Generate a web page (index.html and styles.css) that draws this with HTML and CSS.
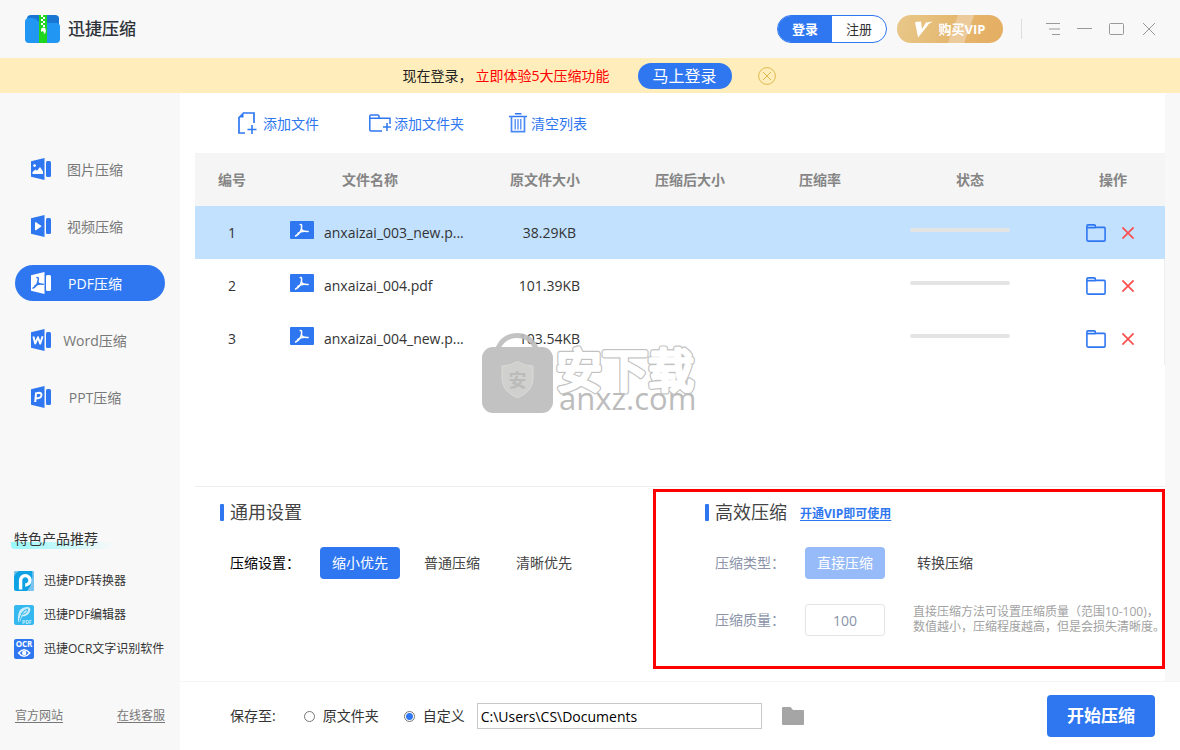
FILE: index.html
```html
<!DOCTYPE html>
<html lang="zh-CN">
<head>
<meta charset="utf-8">
<title>迅捷压缩</title>
<link rel="stylesheet" href="styles.css">
</head>
<body>
<svg class="symbols" aria-hidden="true">
  <symbol id="book" viewBox="0 0 20 22">
    <path d="M0 3.2 13.5 0V22L0 18.8Z"/>
    <rect x="15" y="3" width="5" height="16" rx="1.5"/>
  </symbol>
  <symbol id="pdf-file" viewBox="0 0 24 18">
    <rect width="24" height="18" rx="1" fill="#2f77f1"/>
    <path d="M10.2 3.6C12.2 3 11.6 6 11.4 7.6 11.9 9.6 13.8 10.6 18.2 10.4M11.4 7.6C11.2 10 9 13 5.6 15M7.8 12.4C9.8 11 12 10.3 14.6 10.2" fill="none" stroke="#fff" stroke-width="1.5" stroke-linecap="round"/>
  </symbol>
  <symbol id="folder" viewBox="0 0 20 18">
    <path d="M.9 15.8V2Q.9.9 2 .9H8.3Q9.2.9 9.2 1.8L9.6 3.4H18.2Q19.1 3.4 19.1 4.3V16Q19.1 17.1 18 17.1H2Q.9 17.1.9 15.8ZM1.5 3.6H9.6" fill="none" stroke="#2f77f1" stroke-width="1.6"/>
  </symbol>
  <symbol id="cross" viewBox="0 0 12 12">
    <path d="M.4.4 11.6 11.6M11.6.4.4 11.6" fill="none" stroke="#fa5252" stroke-width="1.8"/>
  </symbol>
</svg>

<header class="titlebar">
  <svg class="logo" viewBox="0 0 35 28" aria-hidden="true">
    <path d="M2 3.5Q2 0 6 0H30Q34 0 34 3.5V12H2Z" fill="#1976d2"/>
    <path d="M0 7Q0 3 4 3H8Q11 3 12.5 5.5T17 8H31Q35 8 35 11.5V24Q35 28 31 28H4Q0 28 0 24Z" fill="#2196f3"/>
    <rect x="14" width="8" height="28" fill="#1fd51f"/>
    <path d="M16 0h2v2h-2zM18 2h2v2h-2zM16 4h2v2h-2zM18 6h2v2h-2zM16 8h2v2h-2zM18 10h2v2h-2z" fill="#fff"/>
    <path d="M16 17V15A2.3 2.3 0 0 1 20.8 15V16.5Q20.5 19 18.7 18.7 19.5 16.8 18 16.2 16.6 16 16 17Z" fill="#fff"/>
  </svg>
  <h1 class="app-name">迅捷压缩</h1>
  <div class="account">
    <button class="account-btn account-login">登录</button>
    <button class="account-btn">注册</button>
  </div>
  <button class="vip">
    <svg class="vip-mark" viewBox="0 0 18 17" aria-hidden="true"><path d="M0 1 6 .5 7 8 11 1.5 18 .5Q14 2 12 5.5L3 16.5Z" fill="#fff"/></svg>
    购买VIP
  </button>
  <div class="window-tools">
    <button class="tool" aria-label="菜单"><svg viewBox="0 0 14 12"><path d="M0 .5H14M3 6H14M6 11.5H14"/></svg></button>
    <button class="tool" aria-label="最小化"><svg viewBox="0 0 14 12"><path d="M-1 5.5H14"/></svg></button>
    <button class="tool" aria-label="最大化"><svg viewBox="0 0 14 12"><rect x="-.5" y=".5" width="14" height="11" rx="1"/></svg></button>
    <button class="tool" aria-label="关闭"><svg viewBox="0 0 14 12"><path d="M1 0 13 12M13 0 1 12"/></svg></button>
  </div>
</header>

<div class="banner">
  <p class="banner-text">现在登录，<span class="banner-hot">立即体验5大压缩功能</span></p>
  <button class="banner-login">马上登录</button>
  <button class="banner-close" aria-label="关闭提示">
    <svg viewBox="0 0 18 18"><circle cx="9" cy="9" r="8.4"/><path d="M5 5 13 13M13 5 5 13"/></svg>
  </button>
</div>

<div class="workspace">
  <aside class="sidebar">
    <nav class="modes">
      <button class="mode">
        <svg class="mode-icon" viewBox="0 0 20 22"><use href="#book"/><circle cx="3.6" cy="7.6" r="1.4" fill="#fff"/><path d="M1.5 16V14L4.5 11.5 6 12.8 9 9 12 13.5V16Z" fill="#fff"/></svg>
        <span class="mode-label">图片压缩</span>
      </button>
      <button class="mode">
        <svg class="mode-icon" viewBox="0 0 20 22"><use href="#book"/><path d="M4 7.5V15Q4.2 15.6 5 15.2L10.2 11.6Q10.6 11.2 10.2 10.8L5 7.2Q4.2 6.8 4 7.5Z" fill="#fff"/></svg>
        <span class="mode-label">视频压缩</span>
      </button>
      <button class="mode mode-active" aria-current="page">
        <svg class="mode-icon" viewBox="0 0 20 22"><use href="#book"/><path d="M6 5.5C8 5 7.2 8 6.8 9.6 7.4 11.6 9 12.4 12.2 12.3M6.8 9.6C6.4 12 4.6 14.6 2 16.2M4 13.7C5.8 12.6 8 12 10 12.1" fill="none" stroke="#2f77f1" stroke-width="1.5" stroke-linecap="round"/></svg>
        <span class="mode-label">PDF压缩</span>
      </button>
      <button class="mode">
        <svg class="mode-icon" viewBox="0 0 20 22"><use href="#book"/><path d="M2.4 7.5 4.2 14.6 7 8.2 9.2 14.6 11.6 7.2" fill="none" stroke="#fff" stroke-width="1.9" stroke-linejoin="round"/></svg>
        <span class="mode-label">Word压缩</span>
      </button>
      <button class="mode">
        <svg class="mode-icon" viewBox="0 0 20 22"><use href="#book"/><path d="M4.2 16 5 7.3 8 6.8Q10.8 6.8 10.4 9.4 9.8 12.2 7 12.2L4.7 12.3" fill="none" stroke="#fff" stroke-width="2"/></svg>
        <span class="mode-label">PPT压缩</span>
      </button>
    </nav>

    <section class="products">
      <h2 class="products-title">特色产品推荐</h2>
      <a class="product" href="#">
        <svg class="product-icon" viewBox="0 0 20 20"><rect width="20" height="20" rx="2" fill="#0ea2e4"/><path d="M18 0Q20 0 20 2V18Q20 20 18 20H13Q20 12 18 0ZM0 6Q1 2 5 0H2Q0 0 0 2Z" fill="#7cc4ef"/><path d="M6.6 18.6V9.5A4.7 4.7 0 1 1 11.2 14" fill="none" stroke="#fff" stroke-width="3.4"/></svg>
        迅捷PDF转换器
      </a>
      <a class="product" href="#">
        <svg class="product-icon" viewBox="0 0 20 20"><rect width="20" height="20" rx="2" fill="#35b8f0"/><path d="M4 17Q3.4 9 6 5 9 1.8 14 2 17.4 2.6 16 6.4 13.6 11.5 8 11.6L6 17Z" fill="#c9edfc"/><path d="M5 17Q6 9 11 5M7 9Q10 4.5 13.5 4.2 14 8 8.5 9.4" fill="none" stroke="#35b8f0" stroke-width="1"/><text x="8" y="18.5" class="tiny-pdf">PDF</text></svg>
        迅捷PDF编辑器
      </a>
      <a class="product" href="#">
        <svg class="product-icon" viewBox="0 0 20 20"><rect width="20" height="20" rx="2" fill="#2f77f1"/><text x="10" y="8.3" class="tiny-ocr">OCR</text><path d="M4.6 14Q10 7.4 15.8 14 10 20.6 4.6 14Z" fill="none" stroke="#fff" stroke-width="1.4"/><circle cx="10.2" cy="14" r="2.2" fill="#fff"/></svg>
        迅捷OCR文字识别软件
      </a>
    </section>

    <div class="side-links">
      <a class="side-link" href="#">官方网站</a>
      <a class="side-link" href="#">在线客服</a>
    </div>
  </aside>

  <main class="main">
    <div class="panel">
      <div class="toolbar">
        <button class="action">
          <svg class="action-icon" viewBox="0 0 20 24"><path d="M6 2H17V12M2 6V22H8" fill="none" stroke="#2f77f1" stroke-width="1.7"/><path d="M1 6.5 6.5 1V6.5Z" fill="#2f77f1"/><path d="M15 14V23M10.5 18.5H19.5" stroke="#2f77f1" stroke-width="1.6"/></svg>
          <span class="action-label">添加文件</span>
        </button>
        <button class="action action-folder">
          <svg class="action-icon" viewBox="0 0 24 24"><path d="M14 20H3Q1.8 20 1.8 19V5Q1.8 4 3 4H9.5Q11 4 11 5V7.2H22V13M2 7.2H11" fill="none" stroke="#2f77f1" stroke-width="1.5"/><path d="M19 12V20M15 16H23" stroke="#2f77f1" stroke-width="1.5"/></svg>
          <span class="action-label">添加文件夹</span>
        </button>
        <button class="action action-clear">
          <svg class="action-icon" viewBox="0 0 20 24"><path d="M1 5.5H19M7 2.8H13.5" stroke="#2f77f1" stroke-width="1.6"/><path d="M3.5 5V20.6H16.5V5" fill="none" stroke="#4a89f3" stroke-width="1.7"/><path d="M7.2 8V18.5M10 8V18.5M12.8 8V18.5" stroke="#4a89f3" stroke-width="1.3"/></svg>
          <span class="action-label">清空列表</span>
        </button>
      </div>

      <div class="list">
        <table class="files">
          <colgroup>
            <col class="col-no"><col class="col-name"><col class="col-size"><col class="col-after"><col class="col-rate"><col class="col-state"><col class="col-ops">
          </colgroup>
          <thead>
            <tr><th>编号</th><th>文件名称</th><th>原文件大小</th><th>压缩后大小</th><th>压缩率</th><th>状态</th><th>操作</th></tr>
          </thead>
          <tbody>
            <tr class="selected">
              <td>1</td>
              <td><div class="file"><svg class="file-icon" aria-hidden="true"><use href="#pdf-file"/></svg>anxaizai_003_new.p...</div></td>
              <td class="size">38.29KB</td><td></td><td></td>
              <td class="state"><progress class="bar" value="0" max="100" aria-label="压缩进度"></progress></td>
              <td class="ops-cell"><div class="ops"><button class="op" aria-label="打开文件夹"><svg class="op-folder"><use href="#folder"/></svg></button><button class="op" aria-label="移除"><svg class="op-cross"><use href="#cross"/></svg></button></div></td>
            </tr>
            <tr>
              <td>2</td>
              <td><div class="file"><svg class="file-icon" aria-hidden="true"><use href="#pdf-file"/></svg>anxaizai_004.pdf</div></td>
              <td class="size">101.39KB</td><td></td><td></td>
              <td class="state"><progress class="bar" value="0" max="100" aria-label="压缩进度"></progress></td>
              <td class="ops-cell"><div class="ops"><button class="op" aria-label="打开文件夹"><svg class="op-folder"><use href="#folder"/></svg></button><button class="op" aria-label="移除"><svg class="op-cross"><use href="#cross"/></svg></button></div></td>
            </tr>
            <tr>
              <td>3</td>
              <td><div class="file"><svg class="file-icon" aria-hidden="true"><use href="#pdf-file"/></svg>anxaizai_004_new.p...</div></td>
              <td class="size">103.54KB</td><td></td><td></td>
              <td class="state"><progress class="bar" value="0" max="100" aria-label="压缩进度"></progress></td>
              <td class="ops-cell"><div class="ops"><button class="op" aria-label="打开文件夹"><svg class="op-folder"><use href="#folder"/></svg></button><button class="op" aria-label="移除"><svg class="op-cross"><use href="#cross"/></svg></button></div></td>
            </tr>
          </tbody>
        </table>
        <svg class="watermark" viewBox="0 0 220 84">
          <defs><text id="mark" x="76" y="54" class="mark-cn">安下载</text></defs>
          <path d="M18 15Q24 2.5 37 2.5T56 15" fill="none" stroke="#bdbdbd" stroke-opacity=".9" stroke-width="5"/>
          <rect x="2" y="14" width="71" height="66" rx="11" fill="#c2c2c2"/>
          <path d="M37.5 28.5Q45 33 53 33V46Q53 58 37.5 65 22 58 22 46V33Q30 33 37.5 28.5Z" fill="#d0d1ce" stroke="#dadbd8"/>
          <text x="37.5" y="54" class="mark-shield">安</text>
          <use href="#mark" stroke="#c2c2c2" stroke-width="6"/>
          <use href="#mark" stroke="#fff" stroke-width="3.6"/>
          <text x="79" y="77" class="mark-url">anxz.com</text>
        </svg>
      </div>

      <div class="settings">
        <section class="group">
          <h2 class="group-title">通用设置</h2>
          <div class="row">
            <span class="row-label">压缩设置：</span>
            <div class="choices">
              <button class="choice choice-on">缩小优先</button>
              <button class="choice">普通压缩</button>
              <button class="choice">清晰优先</button>
            </div>
          </div>
        </section>
        <section class="group group-vip">
          <div class="group-head">
            <h2 class="group-title">高效压缩</h2>
            <a class="vip-link" href="#">开通VIP即可使用</a>
          </div>
          <div class="row">
            <span class="row-label">压缩类型：</span>
            <div class="choices choices-wide">
              <button class="choice choice-on choice-dim">直接压缩</button>
              <button class="choice">转换压缩</button>
            </div>
          </div>
          <div class="row row-quality">
            <label class="row-label" for="quality">压缩质量：</label>
            <input class="quality" id="quality" type="text" value="100">
            <p class="hint">直接压缩方法可设置压缩质量（范围10-100)，<br>数值越小，压缩程度越高，但是会损失清晰度。</p>
          </div>
        </section>
      </div>
    </div>

    <footer class="output">
      <span class="output-label">保存至:</span>
      <label class="pick"><input class="radio" type="radio" name="dest">原文件夹</label>
      <label class="pick"><input class="radio" type="radio" name="dest" checked>自定义</label>
      <input class="path" type="text" value="C:\Users\CS\Documents" aria-label="保存路径">
      <button class="browse" aria-label="选择文件夹"><svg viewBox="0 0 22 18"><path d="M0 1Q0 0 1 0H8.5L11 3H21Q22 3 22 4V17Q22 18 21 18H1Q0 18 0 17Z" fill="#a5a5a5"/></svg></button>
      <button class="start">开始压缩</button>
    </footer>
  </main>
</div>
</body>
</html>
```

FILE: styles.css
```css
* { box-sizing: border-box; }

body {
  margin: 0;
  min-height: 100vh;
  display: flex;
  flex-direction: column;
  background: #f8f8f8;
  color: #333;
  font: 14px/20px "Open Sans", "Noto Sans CJK SC", sans-serif;
}

h1, h2, p { margin: 0; font-weight: normal; }

button {
  border: 0;
  padding: 0;
  background: none;
  color: inherit;
  font: inherit;
  white-space: nowrap;
  cursor: pointer;
}

input { font: inherit; }
svg { display: block; overflow: visible; }
.symbols { position: absolute; width: 0; height: 0; }

/* Title bar */
.titlebar {
  display: flex;
  align-items: center;
  height: 58px;
  padding: 0 24px 0 25px;
}
.logo { width: 35px; height: 28px; margin-right: 8px; }
.app-name { flex: 1; font-size: 17px; font-weight: 500; color: #2d3238; }
.account {
  display: flex;
  height: 28px;
  border: 1px solid #2f77f1;
  border-radius: 14px;
  overflow: hidden;
  background: #fff;
  font-size: 13px;
}
.account-btn { width: 54px; }
.account-login { background: #2f77f1; color: #fff; font-weight: bold; }
.vip {
  display: flex;
  align-items: center;
  justify-content: center;
  gap: 6px;
  width: 106px;
  height: 28px;
  margin-left: 10px;
  border-radius: 14px;
  background: linear-gradient(110deg, #e9c88a 0%, #e4b870 52%, #ecca9a 53%, #eccb9c 66%, #e5b36a 67%, #e5ae62 100%);
  color: #fff;
  font-size: 13px;
  font-weight: bold;
}
.vip-mark { width: 18px; height: 17px; }
.window-tools {
  display: flex;
  align-items: center;
  gap: 18px;
  height: 20px;
  margin-left: 18px;
  padding-left: 24px;
  border-left: 1px solid #ddd;
}
.tool svg { width: 14px; height: 12px; fill: none; stroke: #999; }

/* Login banner */
.banner {
  display: flex;
  align-items: center;
  justify-content: center;
  height: 35px;
  padding-right: 2px;
  background: #ffeebb;
}
.banner-text { color: #222; }
.banner-hot { margin-left: 3px; color: #f00; }
.banner-login {
  width: 94px;
  height: 26px;
  margin: 0 26px 0 28px;
  border-radius: 13px;
  background: #2f77f1;
  color: #fff;
  font-size: 16px;
}
.banner-close svg { width: 18px; height: 18px; fill: none; stroke: #dfb94e; }

.workspace { flex: 1; display: flex; }

/* Sidebar */
.sidebar {
  flex: none;
  width: 180px;
  display: flex;
  flex-direction: column;
  padding: 58px 15px 24px;
}
.modes { display: flex; flex-direction: column; gap: 21px; }
.mode {
  display: flex;
  align-items: center;
  height: 36px;
  padding: 0 26px 0 16px;
  border-radius: 18px;
  color: #777;
}
.mode-icon { width: 20px; height: 22px; fill: #2f77f1; }
.mode-label { flex: 1; padding-top: 2px; }
.mode-active { background: #2f77f1; color: #fff; }
.mode-active .mode-icon { fill: #fff; }
.products {
  display: flex;
  flex-direction: column;
  align-items: flex-start;
  gap: 14px;
  margin: auto -10px 47px -4px;
}
.products-title {
  margin-bottom: 8px;
  padding: 0 15px 0 3px;
  border-radius: 4px;
  background: linear-gradient(90deg, #97f8fb, #f8f8f8) 0 100% / 100% 7px no-repeat;
  font-size: 14px;
}
.product {
  display: flex;
  align-items: center;
  gap: 10px;
  margin-left: 3px;
  color: #333;
  font-size: 12px;
  text-decoration: none;
  white-space: nowrap;
}
.product-icon { width: 20px; height: 20px; }
.tiny-pdf { font: bold 5px "Open Sans", sans-serif; fill: #c9edfc; }
.tiny-ocr { font: bold 8px "Open Sans", sans-serif; fill: #fff; text-anchor: middle; }
.side-links { display: flex; justify-content: space-between; font-size: 12px; }
.side-link { color: #777; text-underline-offset: 2px; }

/* Main column */
.main { flex: 1; display: flex; flex-direction: column; min-width: 0; }
.panel {
  flex: 1;
  display: flex;
  flex-direction: column;
  margin-right: 15px;
  padding-left: 15px;
  background: #fff;
}
.toolbar { display: flex; align-items: center; gap: 44px; height: 60px; padding-left: 42px; }
.action { display: flex; align-items: center; gap: 6px; color: #2f77f1; }
.action-folder { gap: 2px; margin-left: 5px; }
.action-clear { gap: 3px; }
.action-icon { height: 24px; }
.action-label { padding-top: 2px; }

.list { position: relative; flex: 1; }
.files { width: 100%; table-layout: fixed; border-collapse: collapse; text-align: center; }
.files th, .files td { height: 53px; padding: 0; }
.files th { background: #f5f5f5; color: #858585; font-weight: bold; }
.selected { background: #c1e1ff; }
.col-no { width: 74px; }
.col-name { width: 202px; }
.col-size { width: 148px; }
.col-after { width: 142px; }
.col-rate { width: 118px; }
.col-ops { width: 104px; }
.file { display: flex; align-items: center; gap: 10px; padding-left: 21px; white-space: nowrap; }
.file-icon { width: 24px; height: 18px; margin-bottom: 6px; }
.files .size { padding-left: 9px; }
.files .state { padding-right: 20px; }
.files .ops-cell { padding-right: 6px; }
tr:not(.selected) .ops-cell { box-shadow: inset -1px 0 #eee; }
.bar {
  display: block;
  width: 100px;
  height: 4px;
  margin: 0 auto 6px;
  border: 0;
  border-radius: 2px;
  overflow: hidden;
  appearance: none;
  background: #e4e4e4;
}
.bar::-webkit-progress-bar { background: #e4e4e4; }
.bar::-webkit-progress-value { background: #2f77f1; }
.ops { display: flex; align-items: center; justify-content: center; gap: 16px; }
.op-folder { width: 20px; height: 18px; }
.op-cross { width: 12px; height: 12px; }

.watermark {
  position: absolute;
  top: 180px;
  left: 285px;
  width: 220px;
  height: 84px;
  pointer-events: none;
}
.mark-cn { font: 46px "Noto Sans CJK SC", sans-serif; fill: #fff; stroke-linejoin: round; }
.mark-shield { font: bold 18px "Noto Sans CJK SC", sans-serif; fill: #bbb; text-anchor: middle; }
.mark-url { font: 31px "Open Sans", sans-serif; fill: #bcbcbc; }

/* Settings */
.settings {
  display: grid;
  grid-template-columns: 458fr 512fr;
  border-top: 1px solid #eee;
  padding: 2px 0 12px;
}
.group { padding: 10px 0 0 25px; }
.group-vip { min-height: 180px; padding: 7px 0 0 49px; border: 3px solid #f00; }
.group-head { display: flex; align-items: center; gap: 13px; height: 26px; }
.group-title {
  display: flex;
  align-items: center;
  gap: 6px;
  color: #444;
  font-size: 18px;
  line-height: 26px;
}
.group-title::before { content: ""; width: 4px; height: 17px; border-radius: 1px; background: #2f77f1; }
.vip-link { padding-top: 4px; color: #2f77f1; font-size: 12px; font-weight: bold; text-underline-offset: 2px; }
.row { display: flex; align-items: center; height: 32px; margin-top: 22px; padding-left: 10px; }
.row-quality { margin-top: 25px; }
.row-label { width: 90px; color: #000; }
.group-vip .row-label { color: #8a93a8; }
.choices { display: flex; gap: 12px; }
.choices-wide { gap: 20px; }
.choice { width: 80px; height: 32px; border-radius: 4px; color: #444; }
.choice-on { background: #2f77f1; color: #fff; }
.choice-dim { background: #97bbf8; }
.quality {
  width: 80px;
  height: 32px;
  padding: 0;
  border: 1px solid #e4e4e4;
  border-radius: 3px;
  background: #fff;
  color: #8a93a8;
  text-align: center;
}
.hint { width: 0; margin-left: 28px; padding-bottom: 2px; color: #a2a2a2; font-size: 12px; line-height: 15px; white-space: nowrap; }

/* Output bar */
.output {
  display: flex;
  align-items: center;
  height: 69px;
  padding: 0 25px 0 50px;
  border-top: 1px solid #f5f5f5;
  background: #fff;
}
.output-label { margin-right: 28px; }
.pick { display: flex; align-items: center; gap: 8px; margin-right: 25px; white-space: nowrap; }
.radio {
  width: 11px;
  height: 11px;
  margin: 0;
  appearance: none;
  border: 1px solid #767676;
  border-radius: 50%;
  background: #fff;
}
.radio:checked { background: radial-gradient(circle, #2f77f1 0 3px, #fff 4px); }
.pick + .path { margin-left: -13px; }
.path {
  flex: 0 1 285px;
  height: 26px;
  padding: 0 3px;
  border: 1px solid #c8c8c8;
  background: #fff;
  color: #000;
}
.browse { margin: 0 auto 0 20px; }
.browse svg { width: 22px; height: 18px; }
.start {
  width: 108px;
  height: 42px;
  border-radius: 4px;
  background: #2f77f1;
  color: #fff;
  font-size: 17px;
  font-weight: bold;
}
```
